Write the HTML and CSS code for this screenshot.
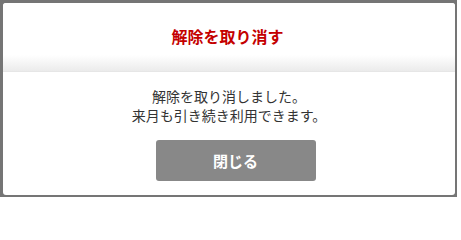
FILE: index.html
```html
<!DOCTYPE html>
<html lang="ja">
<head>
<meta charset="utf-8">
<link rel="stylesheet" href="styles.css">
</head>
<body>
<div class="overlay">
  <div class="dialog">
    <div class="dialog-header">
      <h1 class="dialog-title">解除を取り消す</h1>
    </div>
    <div class="dialog-body">
      <p class="dialog-message">解除を取り消しました。<br>来月も引き続き利用できます。</p>
      <button class="btn-close" type="button">閉じる</button>
    </div>
  </div>
</div>
</body>
</html>
```

FILE: styles.css
```css
html, body {
  margin: 0;
  padding: 0;
  background: #ffffff;
}

body {
  font-family: "Noto Sans CJK JP", "Noto Sans", sans-serif;
}

.overlay {
  width: 452px;
  height: 192px;
  padding: 3px 2px 2px 3px;
  background: #757575;
}

.dialog {
  width: 452px;
  height: 192px;
  background: #ffffff;
  border-radius: 3px;
  overflow: hidden;
  display: flex;
  flex-direction: column;
}

.dialog-header {
  height: 69px;
  flex: none;
  display: flex;
  align-items: center;
  justify-content: center;
  background: linear-gradient(to bottom, #ffffff 0, #ffffff 52px, #ebebeb 100%);
  box-sizing: border-box;
  border-bottom: 1px solid #e6e6e6;
  padding-bottom: 2px;
}

.dialog-title {
  margin: 0;
  font-size: 16px;
  font-weight: bold;
  color: #c40000;
  line-height: 20px;
  padding-right: 3px;
}

.dialog-body {
  display: flex;
  flex-direction: column;
  align-items: center;
  padding-top: 15px;
}

.dialog-message {
  margin: 0;
  font-size: 14px;
  line-height: 19px;
  color: #333333;
  text-align: center;
}

.btn-close {
  margin-top: 15px;
  margin-left: 13px;
  width: 160px;
  height: 41px;
  border: none;
  border-radius: 3px;
  background: #888888;
  color: #ffffff;
  font-family: "Noto Sans CJK JP", "Noto Sans", sans-serif;
  font-size: 15px;
  font-weight: bold;
  padding: 0;
}
```
